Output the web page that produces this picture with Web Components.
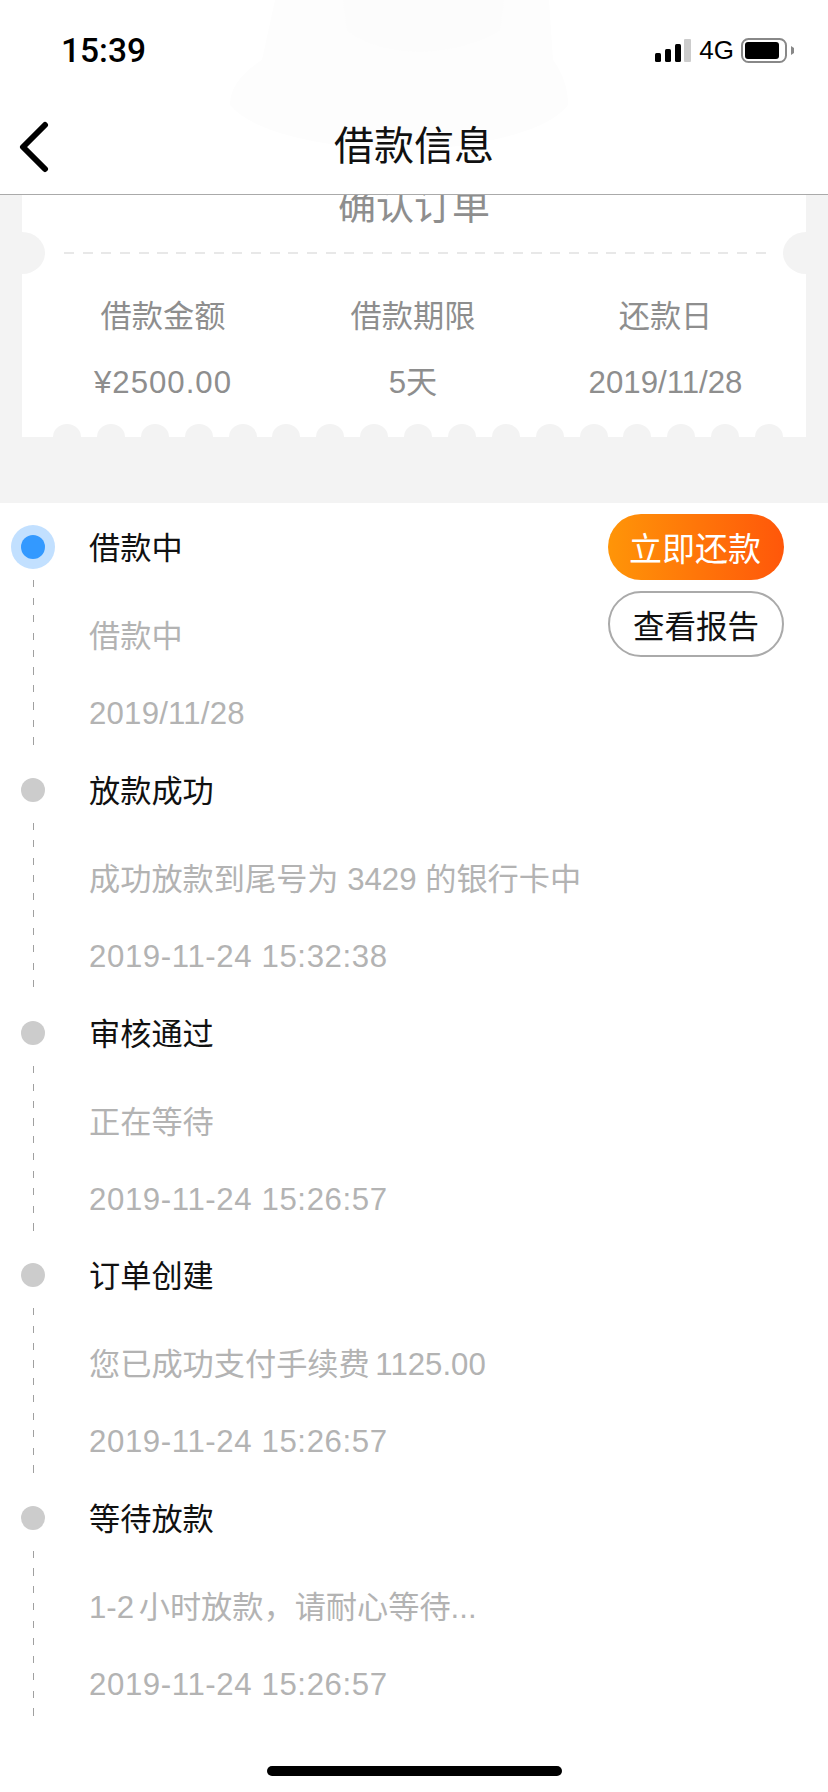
<!DOCTYPE html>
<html lang="zh-CN">
<head>
<meta charset="utf-8">
<title>借款信息</title>
<style>
    html, body {
        margin: 0;
        background: #fff;
    }
    body {
        width: 828px;
        height: 1792px;
        overflow: hidden;
        font-family: "Liberation Sans", "Noto Sans CJK SC", sans-serif;
    }
</style>
</head>
<body>
<loan-header></loan-header>
<loan-ticket></loan-ticket>
<timeline-row heading="借款中" desc="借款中" date="2019/11/28" active>
    <pill-button primary>立即还款</pill-button>
    <pill-button>查看报告</pill-button>
</timeline-row>
<timeline-row heading="放款成功" desc="成功放款到尾号为 3429 的银行卡中" date="2019-11-24 15:32:38"></timeline-row>
<timeline-row heading="审核通过" desc="正在等待" date="2019-11-24 15:26:57"></timeline-row>
<timeline-row heading="订单创建" desc="您已成功支付手续费 1125.00" date="2019-11-24 15:26:57" style="--gap:-3px"></timeline-row>
<timeline-row heading="等待放款" desc="1-2 小时放款，请耐心等待..." date="2019-11-24 15:26:57" style="--gap:-4px"></timeline-row>
<home-bar></home-bar>

<script>
class LoanHeader extends HTMLElement {
    constructor() {
        super();
        this.attachShadow({ mode: 'open' });
    }

    connectedCallback() {
        this.shadowRoot.innerHTML = `
            <style>
                :host {
                    display: block;
                    position: relative;
                    height: 194px;
                    border-bottom: 1px solid #aaa;
                    background: #fff;
                    overflow: hidden;
                }
                .ghost {
                    position: absolute;
                    left: 0;
                    top: 0;
                }
                .status {
                    position: relative;
                    height: 100px;
                    display: flex;
                    align-items: center;
                    padding: 0 34px 0 61px;
                }
                .time {
                    font-family: Roboto, "Liberation Sans", sans-serif;
                    font-size: 33.5px;
                    font-weight: 500;
                    color: #000;
                    flex: 1;
                }
                .net {
                    font-size: 26px;
                    color: #000;
                    margin: 0 7px 0 8px;
                }
                svg {
                    display: block;
                }
                .nav {
                    position: relative;
                    height: 94px;
                    display: grid;
                    grid-template-columns: 1fr auto 1fr;
                    align-items: center;
                }
                .nav svg {
                    margin: -1px 0 0 17px;
                }
                h1 {
                    margin: -8px 0 0;
                    font-size: 40px;
                    font-weight: 400;
                    color: #111;
                }
            </style>
            <svg class="ghost" width="828" height="194">
                <path fill="#fdfdfd" d="M275 0 L549 0 L553 60 Q568 80 568 105 Q545 135 450 147 L350 147 Q255 135 230 105 Q230 80 262 60 Z"></path>
                <path fill="#fcfcfc" d="M343 0 L504 0 L500 30 Q470 50 420 52 Q370 50 347 30 Z"></path>
            </svg>
            <div class="status">
                <span class="time">15:39</span>
                <svg width="29" height="23" viewBox="0 0 29 23">
                    <rect x="0" y="14" width="6" height="9" rx="1.5" fill="#000"></rect>
                    <rect x="10" y="10" width="6" height="13" rx="1.5" fill="#000"></rect>
                    <rect x="20" y="5" width="6" height="18" rx="1.5" fill="#000"></rect>
                </svg>
                <svg width="7" height="23" viewBox="0 0 7 23">
                    <rect x="0" y="0" width="7" height="23" rx="1" fill="#ccc"></rect>
                </svg>
                <span class="net">4G</span>
                <svg width="53" height="25" viewBox="0 0 53 25">
                    <rect x="1" y="1" width="44" height="23" rx="6.5" fill="none" stroke="#888" stroke-width="2"></rect>
                    <rect x="4" y="4" width="34" height="17" rx="3" fill="#000"></rect>
                    <path d="M50 8 L53 10 L53 15 L50 17 Z" fill="#888"></path>
                </svg>
            </div>
            <div class="nav">
                <svg width="34" height="52" viewBox="0 0 34 52">
                    <path d="M28 4 L6 26 L28 48" fill="none" stroke="#000" stroke-width="6" stroke-linecap="round" stroke-linejoin="round"></path>
                </svg>
                <h1>借款信息</h1>
            </div>
        `;
    }
}

class LoanTicket extends HTMLElement {
    constructor() {
        super();
        this.attachShadow({ mode: 'open' });
    }

    connectedCallback() {
        const scallops = '<i></i>'.repeat(17);
        this.shadowRoot.innerHTML = `
            <style>
                :host {
                    display: block;
                    height: 308px;
                    background: #f3f3f3;
                    overflow: hidden;
                }
                .card {
                    position: relative;
                    margin: -30px 22px 0;
                    background: #fff;
                    overflow: hidden;
                }
                .state {
                    height: 87px;
                    line-height: 83px;
                    text-align: center;
                    font-size: 38px;
                    color: #8e8e8e;
                }
                .rule {
                    height: 2px;
                    margin: 0 39px 0 42px;
                    background: repeating-linear-gradient(to right, #e8e8e8 0, #e8e8e8 10px, transparent 10px, transparent 18.7px);
                }
                .notch {
                    position: absolute;
                    top: 67px;
                    width: 46px;
                    height: 42px;
                    border-radius: 50%;
                    background: #f3f3f3;
                }
                .notch.left { left: -23px; }
                .notch.right { right: -23px; }
                .grid {
                    display: grid;
                    grid-template-columns: 250px 250px 255px;
                    grid-auto-rows: 60px;
                    row-gap: 6px;
                    padding: 33px 0 0 16px;
                    text-align: center;
                    line-height: 60px;
                    color: #8e8e8e;
                    font-size: 31.2px;
                }
                .money {
                    letter-spacing: 1px;
                }
                .edge {
                    display: flex;
                    justify-content: space-between;
                    margin-top: 11px;
                    padding: 0 23px 0 31px;
                }
                .edge i {
                    display: block;
                    width: 28px;
                    height: 13px;
                    border-radius: 14px 14px 0 0 / 13px 13px 0 0;
                    background: #f3f3f3;
                }
            </style>
            <div class="card">
                <div class="state">确认订单</div>
                <div class="rule"></div>
                <div class="notch left"></div>
                <div class="notch right"></div>
                <div class="grid">
                    <span>借款金额</span>
                    <span>借款期限</span>
                    <span>还款日</span>
                    <span class="money">¥2500.00</span>
                    <span>5天</span>
                    <span>2019/11/28</span>
                </div>
                <div class="edge">${scallops}</div>
            </div>
        `;
    }
}

class TimelineRow extends HTMLElement {
    constructor() {
        super();
        this.attachShadow({ mode: 'open' });
    }

    connectedCallback() {
        this.shadowRoot.innerHTML = `
            <style>
                :host {
                    display: grid;
                    grid-template-columns: 66px 1fr auto;
                    height: 242.8px;
                    background: #fff;
                }
                .rail {
                    display: flex;
                    flex-direction: column;
                    align-items: center;
                    padding-top: 22px;
                }
                .dot {
                    width: 24px;
                    height: 24px;
                    margin: 10px;
                    border-radius: 50%;
                    background: #ccc;
                }
                :host([active]) .dot {
                    background: #3399ff;
                    box-shadow: 0 0 0 10px #c2e0ff;
                }
                .line {
                    width: 1px;
                    height: 166px;
                    margin: 11px 0 0 1px;
                    background: repeating-linear-gradient(to bottom, #a0a0a0 0, #a0a0a0 7px, transparent 7px, transparent 17.5px);
                }
                .text {
                    padding: 2px 0 0 23px;
                    font-size: 31.2px;
                    color: #b3b3b3;
                }
                .text div {
                    white-space: nowrap;
                }
                .heading {
                    height: 88px;
                    line-height: 88px;
                    color: #111;
                }
                .desc {
                    height: 88px;
                    line-height: 88px;
                    word-spacing: var(--gap, 0);
                }
                .date {
                    line-height: 66px;
                    letter-spacing: .6px;
                }
                :host([active]) .date {
                    letter-spacing: .2px;
                }
                .actions {
                    display: flex;
                    flex-direction: column;
                    gap: 11px;
                    padding: 11px 44px 0 0;
                }
            </style>
            <div class="rail">
                <div class="dot"></div>
                <div class="line"></div>
            </div>
            <div class="text">
                <div class="heading">${this.getAttribute('heading')}</div>
                <div class="desc">${this.getAttribute('desc')}</div>
                <div class="date">${this.getAttribute('date')}</div>
            </div>
            <div class="actions"><slot></slot></div>
        `;
    }
}

class PillButton extends HTMLElement {
    constructor() {
        super();
        this.attachShadow({ mode: 'open' });
    }

    connectedCallback() {
        this.shadowRoot.innerHTML = `
            <style>
                :host {
                    display: flex;
                    align-items: center;
                    justify-content: center;
                    box-sizing: border-box;
                    width: 176px;
                    height: 66px;
                    border: 2px solid #aaa;
                    border-radius: 33px;
                    font-size: 31.5px;
                    color: #111;
                }
                :host([primary]) {
                    border: 0;
                    color: #fff;
                    font-size: 33px;
                    padding-right: 2px;
                    background: linear-gradient(to right, #ff9508, #ff570a);
                }
            </style>
            <slot></slot>
        `;
    }
}

class HomeBar extends HTMLElement {
    constructor() {
        super();
        this.attachShadow({ mode: 'open' });
    }

    connectedCallback() {
        this.shadowRoot.innerHTML = `
            <style>
                :host {
                    display: flex;
                    justify-content: center;
                    padding-top: 49px;
                }
                div {
                    width: 295px;
                    height: 10px;
                    border-radius: 5px;
                    background: #000;
                }
            </style>
            <div></div>
        `;
    }
}

customElements.define('loan-header', LoanHeader);
customElements.define('loan-ticket', LoanTicket);
customElements.define('timeline-row', TimelineRow);
customElements.define('pill-button', PillButton);
customElements.define('home-bar', HomeBar);
</script>
</body>
</html>
